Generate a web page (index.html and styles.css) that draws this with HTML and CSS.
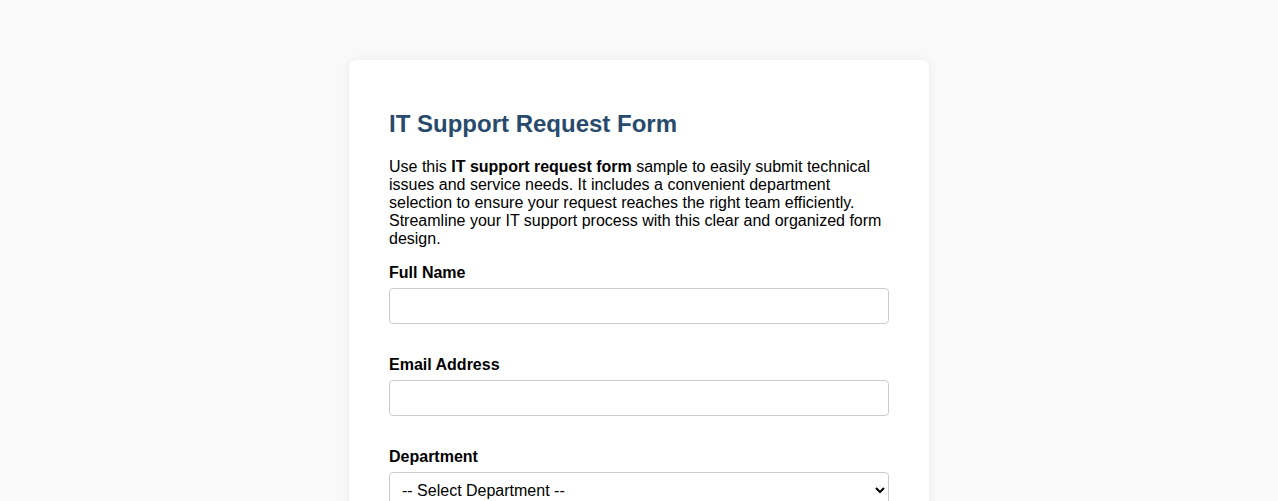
FILE: index.html
```html
<!DOCTYPE html>
<html lang="en">
<head>
<meta charset="utf-8">
<title>IT Support Request Form</title>
<link rel="stylesheet" href="styles.css">
</head>
<body>
<div class="card">
  <h2 class="title">IT Support Request Form</h2>
  <p class="intro">Use this <strong>IT support request form</strong> sample to easily submit technical issues and service needs. It includes a convenient department selection to ensure your request reaches the right team efficiently. Streamline your IT support process with this clear and organized form design.</p>
  <form class="form">
    <div class="field">
      <label class="label" for="name">Full Name</label>
      <input class="input" id="name" type="text">
    </div>
    <div class="field">
      <label class="label" for="email">Email Address</label>
      <input class="input" id="email" type="email">
    </div>
    <div class="field">
      <label class="label" for="dept">Department</label>
      <select class="input select" id="dept">
        <option>-- Select Department --</option>
        <option>Hardware</option>
        <option>Software</option>
        <option>Network</option>
      </select>
    </div>
  </form>
</div>
</body>
</html>
```

FILE: styles.css
```css
html, body {
  margin: 0;
  padding: 0;
}
body {
  background: #f9f9f9;
  font-family: "Liberation Sans", Arial, sans-serif;
  font-size: 16px;
  color: #000;
}
.card {
  width: 500px;
  margin: 60px auto 0;
  padding: 30px 40px 40px;
  background: #fff;
  border-radius: 8px;
  box-shadow: 0 0 10px rgba(0, 0, 0, 0.06);
}
.title {
  margin: 20px 0 20px;
  font-size: 24px;
  font-weight: bold;
  color: #284a6c;
}
.intro {
  margin: 0 0 16px;
}
.form {
  margin: 0;
}
.field {
  margin-bottom: 32px;
}
.label {
  display: block;
  font-weight: bold;
  margin-bottom: 6px;
}
.input {
  display: block;
  box-sizing: border-box;
  width: 100%;
  height: 36px;
  padding: 8px 10px;
  border: 1px solid #ccc;
  border-radius: 4px;
  background: #fff;
  font-family: "Liberation Sans", Arial, sans-serif;
  font-size: 16px;
  color: #000;
}
.select {
  padding: 6px 8px;
}
```
